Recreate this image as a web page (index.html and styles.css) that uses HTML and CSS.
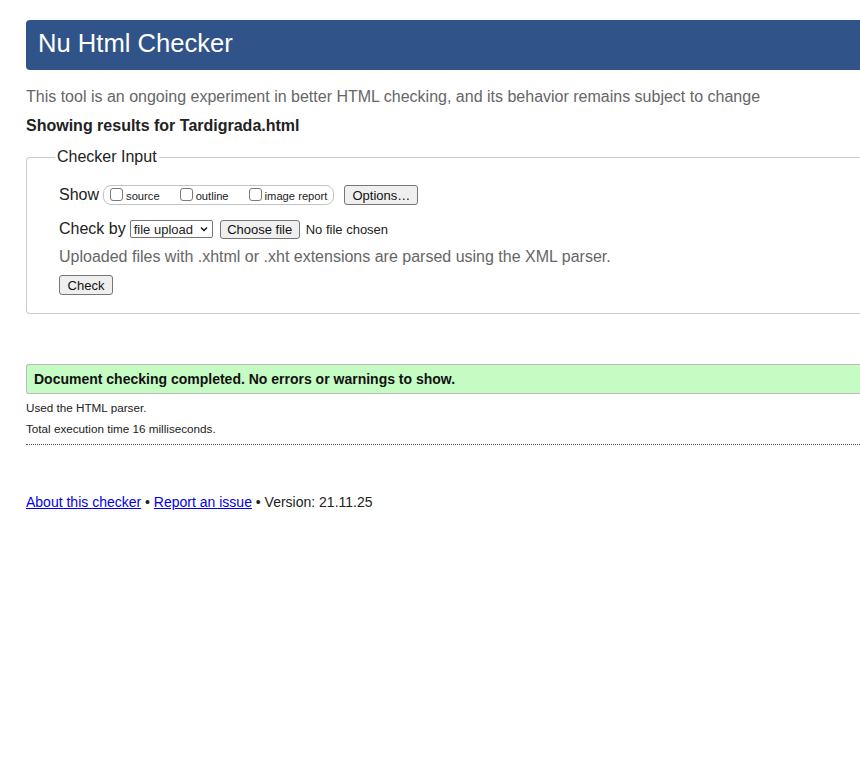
FILE: index.html
```html
<!DOCTYPE html>
<html lang="en">
<head>
    <meta charset="UTF-8">
    <meta name="viewport" content="width=device-width, initial-scale=1.0">
    <title>Showing results for Tardigrada.html - Nu Html Checker</title>
    <link rel="stylesheet" href="styles.css">
</head>
<body>
    <div class="page">
        <h1 class="banner">Nu Html Checker</h1>

        <p class="intro">This tool is an ongoing experiment in better HTML checking, and its behavior remains subject to change</p>
        <p class="showing">Showing results for Tardigrada.html</p>

        <form class="checker" onsubmit="event.preventDefault();">
            <fieldset>
                <legend>Checker Input</legend>

                <div class="row">
                    <span class="row-label">Show</span>
                    <span class="show-box">
                        <label class="opt"><input type="checkbox">source</label>
                        <label class="opt"><input type="checkbox">outline</label>
                        <label class="opt"><input type="checkbox">image report</label>
                    </span>
                    <button type="button" class="btn btn-options">Options…</button>
                </div>

                <div class="row row-by">
                    <span class="row-label">Check by</span>
                    <span class="select">file upload
                        <svg width="8" height="6" viewBox="0 0 8 6"><path d="M1 1.5 L4 4.5 L7 1.5" fill="none" stroke="#111" stroke-width="1.4"/></svg>
                    </span>
                    <span class="btn btn-file">Choose file</span>
                    <span class="file-name">No file chosen</span>
                </div>

                <p class="hint">Uploaded files with .xhtml or .xht extensions are parsed using the XML parser.</p>

                <button type="submit" class="btn btn-check">Check</button>
            </fieldset>
        </form>

        <div class="success">Document checking completed. No errors or warnings to show.</div>
        <p class="details">Used the HTML parser.</p>
        <p class="details">Total execution time 16 milliseconds.</p>
        <hr class="dotted">

        <p class="footer">
            <a href="#">About this checker</a> • <a href="#">Report an issue</a> • Version: 21.11.25
        </p>
    </div>
</body>
</html>
```

FILE: styles.css
```css
body {
    margin: 0;
    font-family: "Liberation Sans", Arial, sans-serif;
    color: #222;
    background-color: #fff;
}

.page {
    padding: 20px 0 0 26px;
}

.banner {
    margin: 0;
    height: 46px;
    padding: 0 0 4px 12px;
    line-height: 46px;
    font-size: 25.6px;
    font-weight: normal;
    color: #fff;
    background-color: #30538a;
    border-radius: 4px 0 0 4px;
}

.intro {
    margin: 17px 0 0;
    font-size: 16px;
    line-height: 20px;
    color: #666;
}

.showing {
    margin: 9px 0 0;
    font-size: 16px;
    line-height: 20px;
    font-weight: bold;
}

.checker {
    margin: 11px 0 0;
}

fieldset {
    margin: 0;
    padding: 18px 0 18px 32px;
    border: 1px solid #ccc;
    border-right: none;
    border-radius: 4px 0 0 4px;
}

legend {
    padding: 0 2px;
    margin-left: -4px;
    font-size: 16px;
    line-height: 20px;
}

.row {
    display: flex;
    align-items: center;
    height: 20px;
    font-size: 16px;
}

.row-label {
    margin-right: 4px;
}

.show-box {
    display: flex;
    align-items: center;
    height: 18px;
    padding: 0 6px 0 6px;
    border: 1px solid #c4c4c4;
    border-radius: 8px;
    gap: 20px;
}

.opt {
    display: flex;
    align-items: center;
    font-size: 11.2px;
    position: relative;
    top: 1px;
}

.opt input {
    appearance: none;
    width: 13px;
    height: 13px;
    margin: 0 3px 0 0;
    border: 1px solid #7a7a7a;
    border-radius: 3px;
    background-color: #fff;
    position: relative;
    top: -2px;
}

.btn {
    display: inline-flex;
    align-items: center;
    justify-content: center;
    box-sizing: border-box;
    height: 20px;
    padding: 0 6px;
    font-family: "Liberation Sans", Arial, sans-serif;
    font-size: 13px;
    color: #111;
    background-color: #efefef;
    border: 1px solid #767676;
    border-radius: 3px;
    cursor: pointer;
}

.btn-options {
    margin-left: 10px;
    width: 74px;
}

.row-by {
    margin-top: 14px;
}

.select {
    display: inline-flex;
    align-items: center;
    justify-content: space-between;
    box-sizing: border-box;
    width: 83px;
    height: 18px;
    padding: 0 4px 0 3px;
    font-size: 13px;
    border: 1px solid #767676;
    border-radius: 2px;
    background-color: #fff;
}

.btn-file {
    margin-left: 7px;
    width: 80px;
    height: 19px;
}

.file-name {
    margin-left: 6px;
    font-size: 13px;
}

.hint {
    margin: 8px 0 0;
    font-size: 16px;
    line-height: 20px;
    color: #666;
}

.btn-check {
    display: flex;
    margin-top: 8px;
    width: 54px;
}

.success {
    margin-top: 50px;
    height: 28px;
    line-height: 28px;
    padding-left: 7px;
    font-size: 14px;
    font-weight: bold;
    color: #111;
    background-color: #c5fcc4;
    border: 1px solid #bbb;
    border-right: none;
    border-radius: 3px 0 0 3px;
}

.details {
    margin: 7px 0 0;
    font-size: 11.7px;
    line-height: 14px;
}

.dotted {
    margin: 8px 0 0;
    border: none;
    border-top: 1px dotted #555;
    height: 0;
}

.footer {
    margin: 49px 0 0;
    font-size: 14px;
    line-height: 17px;
}

.footer a {
    color: #00e;
}
```
